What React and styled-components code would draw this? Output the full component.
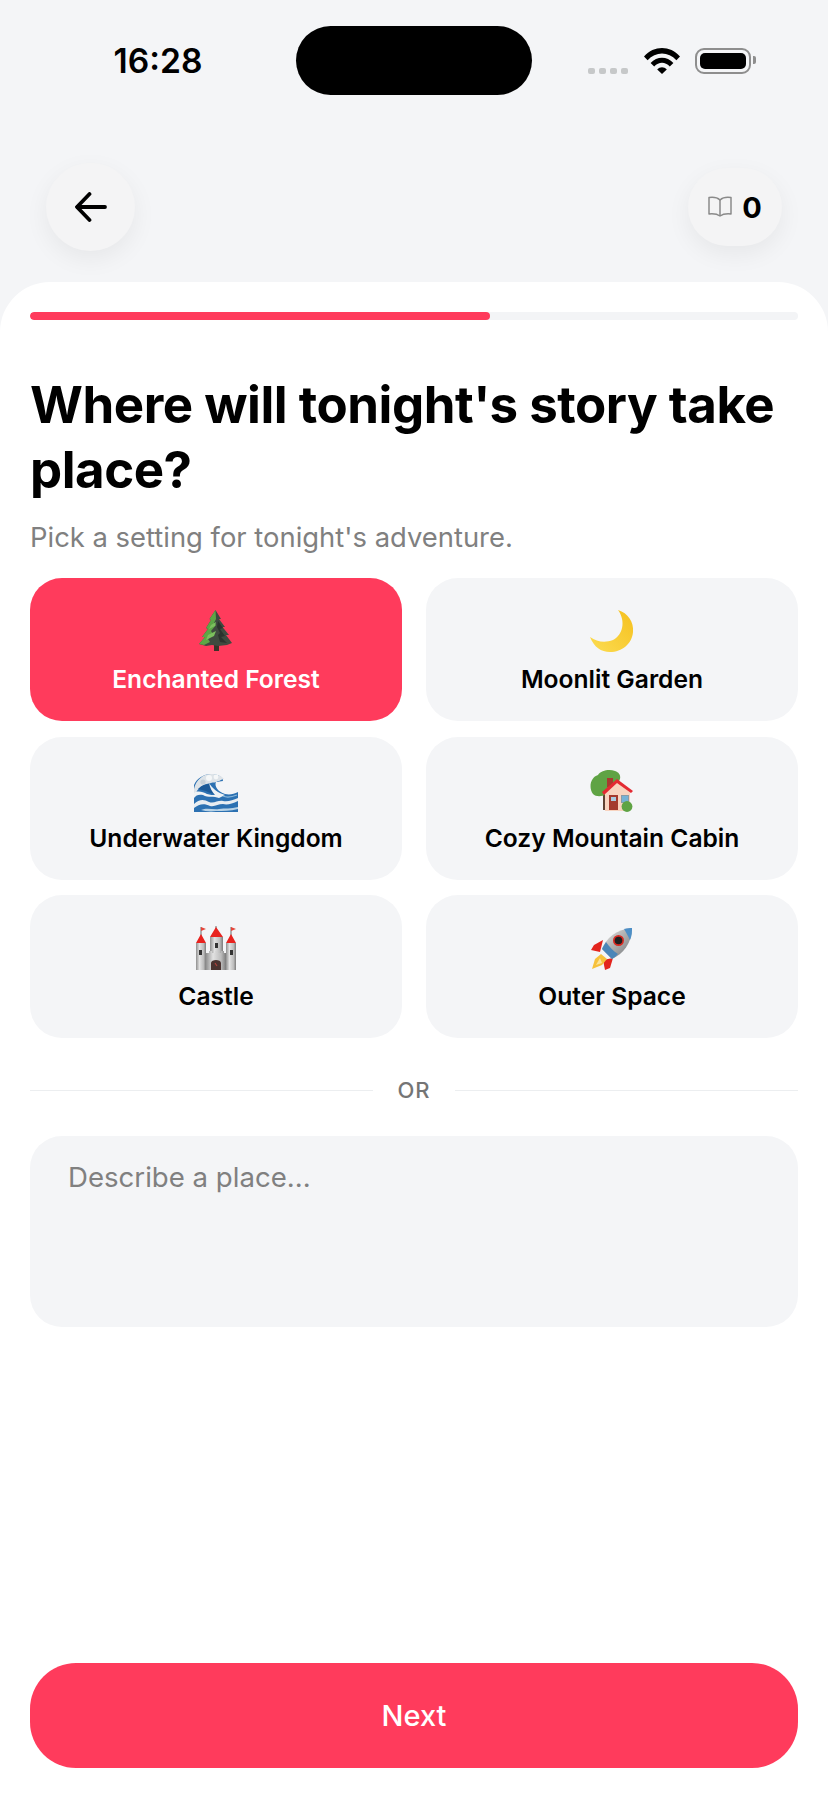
import styled, { createGlobalStyle } from 'styled-components'

const GlobalStyle = createGlobalStyle`
    html, body {
        margin: 0;
        padding: 0;
        background: #ffffff;
    }
    * {
        box-sizing: border-box;
    }
`;

const TreeEmoji = () => (
    <svg width="44" height="44" viewBox="0 0 44 44">
        <rect x="20" y="36" width="5" height="6" fill="#3b3228" />
        <path d="M21.5 1 L27 10 L25 10 L31 18 L28.5 18 L35 26 L32 26 L38 34 L33 36 L24 37 L18 36 L12 37 L5 35 L11 28 L8 28 L14 20 L12 19 L17 11 L15.5 10 Z" fill="#3f4a3f" />
        <path d="M21.5 1 L22 10 L20 14 L22 16 L17 22 L19 25 L14 30 L16 33 L10 36 L5 35 L11 28 L8 28 L14 20 L12 19 L17 11 L15.5 10 Z" fill="#5da645" />
        <path d="M24 12 L29 19 L26 20 L31 27 L27 28 L33 34 L26 33 L24 26 L26 24 L23 18 Z" fill="#2c332e" />
        <path d="M14 26 L22 22 L20 27 L12 31 Z M17 16 L22 13 L21 17 L15 20 Z" fill="#7cc05e" />
    </svg>
)

const MoonEmoji = () => (
    <svg width="44" height="44" viewBox="0 0 44 44">
        <defs>
            <linearGradient id="moonFill" x1="0.2" y1="0.9" x2="0.9" y2="0.2">
                <stop offset="0" stopColor="#fbd84a" />
                <stop offset="1" stopColor="#f6c426" />
            </linearGradient>
        </defs>
        <path d="M28 1 C38 4 44 13 43 23 C42 35 32 43 20 43 C11 43 4 38 0 28 C7 33 15 34 23 31 C33 26 36 12 28 1 Z" fill="url(#moonFill)" />
    </svg>
)

const WaveEmoji = () => (
    <svg width="44" height="38" viewBox="0 0 44 38">
        <path d="M0 38 L0 11 C3 4 10 0 17 0 C24 0 29 3 29 7 L22 8 C20 12 24 18 31 20 C36 21 40 20 44 18 L44 38 Z" fill="#2c71b2" />
        <path d="M0 15 C2 6 9 0 17 0 C23 0 28 2 30 5 C27 5 27 7 24 7 C22 9 19 8 17 9 C11 10 5 12 2 19 L0 21 Z" fill="#dde3e8" />
        <circle cx="22" cy="3" r="2.4" fill="#f5f7f8" />
        <circle cx="15" cy="4" r="3" fill="#f5f7f8" />
        <circle cx="9" cy="8" r="2.6" fill="#c6d0d8" />
        <path d="M4 15 C8 11 12 10 16 10 C17 14 19 17 22 20 C19 20 15 19 12 17 C9 16 7 16 4 15 Z" fill="#1c5a98" />
        <path d="M15 9 C18 14 24 19 31 21 L25 24 C20 22 14 24 9 21 C5 20 2 21 0 24 L0 19 C4 16 9 18 13 20 C16 21 19 21 21 21 C18 18 16 14 15 9 Z" fill="#eef2f5" />
        <path d="M0 30 C5 25 10 25 15 28 C20 30 24 26 29 27 C34 28 39 26 44 24 L44 27 C38 30 33 31 29 30 C24 30 21 33 16 32 C10 29 5 30 0 34 Z" fill="#e8edf1" />
        <path d="M7 36 C13 33 19 36 25 35 C31 34 37 35 44 33 L44 35 C36 37 29 37 22 37 C16 38 11 37 7 36 Z" fill="#b9d3e6" />
        <path d="M29 22 C33 24 38 23 43 21" stroke="#8ab7d9" strokeWidth="1.2" fill="none" />
    </svg>
)

const HouseEmoji = () => (
    <svg width="44" height="42" viewBox="0 0 44 42">
        <rect x="13" y="24" width="3" height="16" fill="#5e4233" />
        <path d="M3 24 C-2 17 1 7 8 5 C11 0 20 -1 25 1 C31 3 31 8 29 11 L16 24 C12 27 6 27 3 24 Z" fill="#5fa344" />
        <rect x="17" y="8" width="6" height="9" fill="#a8392f" />
        <path d="M15 41 L15 21 L27 11 L40 21 L40 41 Z" fill="#f8d3bf" />
        <path d="M12 22 L27 9 L43 21 L41 23 L27 13 L14 25 Z" fill="#e32a33" />
        <rect x="19" y="25" width="9" height="15" fill="#a33a2e" />
        <rect x="21" y="27" width="5" height="4" fill="#a9cbe0" />
        <rect x="31" y="25" width="8" height="8" fill="#8a9ba6" />
        <rect x="32" y="26" width="6" height="6" fill="#76b2d6" />
        <circle cx="37" cy="36.5" r="5.4" fill="#5fa344" />
    </svg>
)

const CastleEmoji = () => (
    <svg width="42" height="44" viewBox="0 0 42 44">
        <defs>
            <linearGradient id="castleStone" x1="0" y1="0" x2="1" y2="0">
                <stop offset="0" stopColor="#8f8f8f" />
                <stop offset="0.35" stopColor="#e2e2e2" />
                <stop offset="0.75" stopColor="#bdbdbd" />
                <stop offset="1" stopColor="#7c7c7c" />
            </linearGradient>
        </defs>
        <path d="M6 1 L6 11 M21 0 L21 5 M36 1 L36 11" stroke="#6b6b6b" strokeWidth="1" />
        <path d="M6 1 L11 3 L6 5 Z M36 1 L41 3 L36 5 Z" fill="#e5453a" />
        <path d="M1 17 L6 8 L11 17 Z M31 17 L36 8 L41 17 Z M15 11 L21 1 L28 11 Z" fill="#e8231f" />
        <rect x="1" y="17" width="10" height="27" fill="url(#castleStone)" />
        <rect x="31" y="17" width="10" height="27" fill="url(#castleStone)" />
        <rect x="15" y="11" width="13" height="20" fill="url(#castleStone)" />
        <path d="M11 27 H14 V25 H17 V27 H20 V25 H23 V27 H26 V25 H29 V27 H31 V44 H11 Z" fill="url(#castleStone)" />
        <rect x="4" y="24" width="3" height="5" fill="#333333" />
        <rect x="35" y="24" width="3" height="5" fill="#333333" />
        <rect x="20" y="17" width="3" height="5" fill="#333333" />
        <path d="M16 44 V37 C16 33 26 33 26 37 V44 Z" fill="#4a3330" />
        <path d="M20 37 L22 40" stroke="#b2423a" strokeWidth="1.2" />
    </svg>
)

const RocketEmoji = () => (
    <svg width="42" height="42" viewBox="0 0 42 42">
        <defs>
            <linearGradient id="rocketBody" x1="0" y1="0" x2="1" y2="1">
                <stop offset="0" stopColor="#e8e8e8" />
                <stop offset="0.55" stopColor="#a8a8a8" />
                <stop offset="1" stopColor="#6d7379" />
            </linearGradient>
        </defs>
        <path d="M12 12 L3 17 L0 22 L9 24 Z" fill="#e3241d" />
        <path d="M22 30 L19 40 L14 42 L12 32 Z" fill="#e3241d" />
        <path d="M10 26 L4 31 L1 41 L11 37 L16 31 Z" fill="#f6c13b" />
        <path d="M9 30 L5 37 L11 35 Z" fill="#fbe39a" />
        <path d="M11 21 C15 10 26 1 41 0 C41 15 32 26 21 31 Z" fill="url(#rocketBody)" />
        <path d="M33 1 C36 0 39 0 41 0 C41 3 41 8 39 12 C37 8 35 4 33 1 Z" fill="#4d8fc7" />
        <path d="M11 21 C12 18 14 16 15 14 C18 18 22 23 27 26 C25 28 23 30 21 31 Z" fill="#4b86b8" />
        <circle cx="27.5" cy="12.5" r="5.5" fill="#d92a22" />
        <circle cx="27.5" cy="12.5" r="3.8" fill="#1f1f1f" />
    </svg>
)

const options = [
    { label: 'Enchanted Forest', Emoji: TreeEmoji, selected: true },
    { label: 'Moonlit Garden', Emoji: MoonEmoji },
    { label: 'Underwater Kingdom', Emoji: WaveEmoji },
    { label: 'Cozy Mountain Cabin', Emoji: HouseEmoji },
    { label: 'Castle', Emoji: CastleEmoji },
    { label: 'Outer Space', Emoji: RocketEmoji },
]

const App = () => {
    return (
        <Screen>
            <GlobalStyle />
            <StatusBar>
                <Time>16:28</Time>
                <Island />
                <StatusIcons>
                    <SignalDots>
                        <i /><i /><i /><i />
                    </SignalDots>
                    <svg width="36" height="26" viewBox="0 0 36 26">
                        <path d="M0 8.5 C10 -2.8 26 -2.8 36 8.5 L32.4 12.2 C24.4 3.4 11.6 3.4 3.6 12.2 Z" fill="#000" />
                        <path d="M6.6 15 C13 8 23 8 29.4 15 L25.8 18.6 C21 13.6 15 13.6 10.2 18.6 Z" fill="#000" />
                        <path d="M13.2 21.4 C16 18.6 20 18.6 22.8 21.4 L18 26 Z" fill="#000" />
                    </svg>
                    <Battery>
                        <BatteryFill />
                    </Battery>
                </StatusIcons>
            </StatusBar>
            <Header>
                <BackButton>
                    <svg width="32" height="30" viewBox="0 0 32 30" fill="none" stroke="#000" strokeWidth="3.8" strokeLinecap="round" strokeLinejoin="round">
                        <path d="M14.5 2 L2 15 L14.5 28" />
                        <path d="M2.5 15 H30" />
                    </svg>
                </BackButton>
                <CountPill>
                    <svg width="24" height="22" viewBox="0 0 24 22" fill="none" stroke="#8a8a8a" strokeWidth="1.5" strokeLinejoin="round">
                        <path d="M12 4 C9.5 1.8 5 1 1 1.6 V18 C5 17.6 9.5 18.2 12 20 C14.5 18.2 19 17.6 23 18 V1.6 C19 1 14.5 1.8 12 4 Z" />
                        <path d="M12 4 V20" />
                    </svg>
                    <Count>0</Count>
                </CountPill>
            </Header>
            <Sheet>
                <ProgressTrack>
                    <ProgressFill style={{ width: `${(460 / 768) * 100}%` }} />
                </ProgressTrack>
                <Title>Where will tonight's story take place?</Title>
                <Subtitle>Pick a setting for tonight's adventure.</Subtitle>
                <OptionGrid>
                    {options.map(({ label, Emoji, selected }) => (
                        <OptionCard key={label} $selected={selected}>
                            <EmojiBox><Emoji /></EmojiBox>
                            <OptionLabel>{label}</OptionLabel>
                        </OptionCard>
                    ))}
                </OptionGrid>
                <Divider>
                    <Line />
                    <OrText>OR</OrText>
                    <Line />
                </Divider>
                <PlaceInput placeholder="Describe a place..." />
                <NextButton>Next</NextButton>
            </Sheet>
        </Screen>
    )
}

export default App


const Screen = styled.div`
    width: 828px;
    height: 1799px;
    display: flex;
    flex-direction: column;
    background-color: #f4f5f7;
    font-family: Inter, "Liberation Sans", sans-serif;
    color: #000;
    overflow: hidden;
`;

const StatusBar = styled.div`
    display: grid;
    grid-template-columns: 296px 236px 1fr;
    align-items: center;
    padding-top: 26px;
    height: 95px;
`;

const Time = styled.div`
    font-size: 33.6px;
    font-weight: 600;
    text-align: center;
    padding-left: 20px;
`;

const Island = styled.div`
    height: 69px;
    border-radius: 35px;
    background-color: #000;
`;

const StatusIcons = styled.div`
    display: flex;
    align-items: flex-start;
    padding-left: 56px;
    height: 26px;
`;

const SignalDots = styled.div`
    display: flex;
    gap: 4px;
    margin-top: 20px;
    margin-right: 16px;

    > i {
        width: 7px;
        height: 6px;
        border-radius: 2px;
        background-color: #c6c8c9;
    }
`;

const Battery = styled.div`
    position: relative;
    width: 56px;
    height: 26px;
    margin-left: 15px;
    padding: 3px;
    border: 2.5px solid #8e8e8e;
    border-radius: 9px;

    &::after {
        content: '';
        position: absolute;
        right: -6.5px;
        top: 6.5px;
        width: 3px;
        height: 8px;
        border-radius: 0 2px 2px 0;
        background-color: #8e8e8e;
    }
`;

const BatteryFill = styled.div`
    width: 100%;
    height: 100%;
    border-radius: 5px;
    background-color: #000;
`;

const Header = styled.div`
    display: flex;
    justify-content: space-between;
    align-items: center;
    height: 88px;
    margin-top: 68px;
    padding: 0 46px;
`;

const BackButton = styled.div`
    width: 89px;
    height: 88px;
    display: flex;
    align-items: center;
    justify-content: center;
    border-radius: 50%;
    background-color: #f4f4f5;
    box-shadow: 0 8px 24px rgba(0, 0, 0, 0.06);
`;

const CountPill = styled.div`
    width: 94px;
    height: 78px;
    display: flex;
    align-items: center;
    justify-content: center;
    gap: 10px;
    border-radius: 39px;
    background-color: #f4f4f5;
    box-shadow: 0 8px 24px rgba(0, 0, 0, 0.06);
`;

const Count = styled.span`
    font-size: 29px;
    font-weight: 700;
`;

const Sheet = styled.div`
    flex: 1;
    display: flex;
    flex-direction: column;
    margin-top: 31px;
    padding: 30px 30px 31px;
    border-radius: 50px 50px 0 0;
    background-color: #fff;
`;

const ProgressTrack = styled.div`
    height: 8px;
    border-radius: 4px;
    background-color: #f3f4f6;
    overflow: hidden;
`;

const ProgressFill = styled.div`
    height: 100%;
    border-radius: 4px;
    background-color: #ff3b5c;
`;

const Title = styled.h1`
    margin: 52px 0 0;
    font-size: 51px;
    line-height: 65px;
    font-weight: 700;
    letter-spacing: -0.47px;
`;

const Subtitle = styled.p`
    margin: 18px 0 0;
    font-size: 27.4px;
    line-height: 34px;
    font-weight: 400;
    color: #808080;
`;

const OptionGrid = styled.div`
    display: grid;
    grid-template-columns: 1fr 1fr;
    column-gap: 24px;
    row-gap: 15.5px;
    margin-top: 24px;
`;

const OptionCard = styled.div`
    height: 143px;
    display: flex;
    flex-direction: column;
    align-items: center;
    padding-top: 31px;
    border-radius: 32px;
    background-color: ${props => props.$selected ? '#ff3b5c' : '#f4f5f7'};
    color: ${props => props.$selected ? '#fff' : '#000'};
`;

const EmojiBox = styled.div`
    height: 44px;
    display: flex;
    align-items: flex-end;
    justify-content: center;
`;

const OptionLabel = styled.div`
    margin-top: 11px;
    font-size: 24.6px;
    line-height: 30px;
    font-weight: 580;
`;

const Divider = styled.div`
    display: flex;
    align-items: center;
    gap: 24px;
    margin-top: 37px;
`;

const Line = styled.div`
    flex: 1;
    height: 1px;
    background-color: #eceef0;
`;

const OrText = styled.span`
    font-size: 22px;
    line-height: 30px;
    font-weight: 500;
    letter-spacing: 1px;
    color: #757575;
`;

const PlaceInput = styled.textarea`
    display: block;
    width: 100%;
    height: 191px;
    margin-top: 31px;
    padding: 24px 38px;
    border: none;
    border-radius: 32px;
    outline: none;
    resize: none;
    background-color: #f4f5f7;
    font-family: inherit;
    font-size: 27.6px;
    line-height: 34px;

    &::placeholder {
        color: #808080;
        opacity: 1;
    }
`;

const NextButton = styled.div`
    height: 105px;
    margin-top: auto;
    display: flex;
    align-items: center;
    justify-content: center;
    border-radius: 46px;
    background-color: #ff3b5c;
    color: #fff;
    font-size: 29px;
    font-weight: 450;
`;
